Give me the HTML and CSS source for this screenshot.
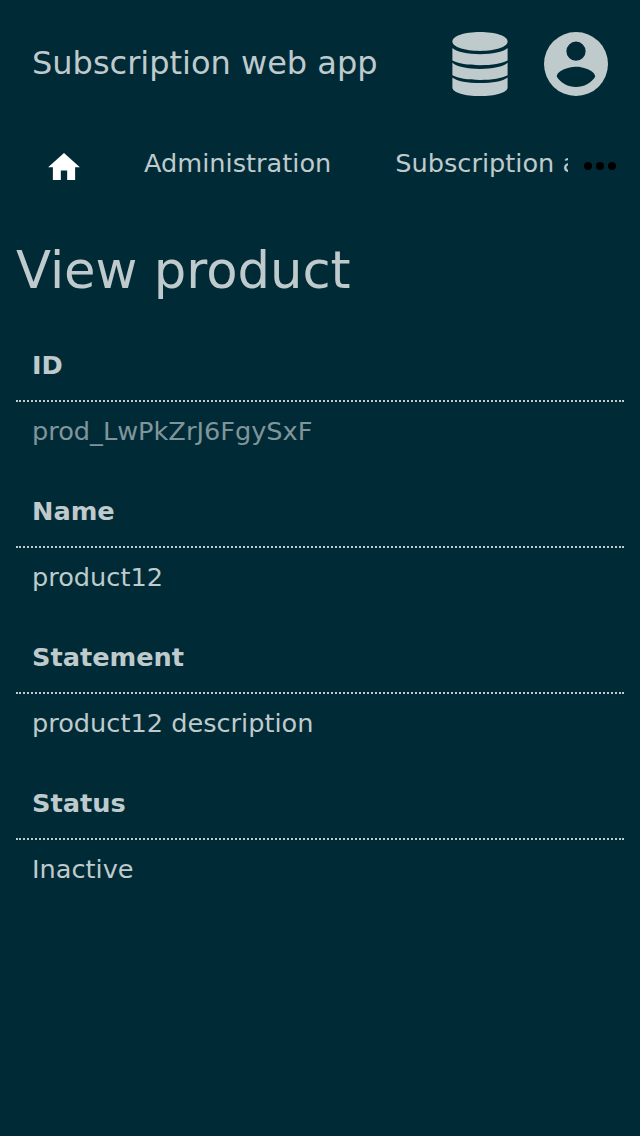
FILE: index.html
```html
<!DOCTYPE html>
<html lang="en">
<head>
<meta charset="utf-8">
<title>View product</title>
<link rel="stylesheet" href="styles.css">
</head>
<body>
<header class="header">
  <a class="brand">Subscription web app</a>
  <div class="actions">
    <svg class="icon-db" viewBox="0 0 56 64"><path d="M.4 9.500C.4 4 12.500 0 28 0s27.600 4 27.600 9.500S43.500 18.900 28 18.900.4 15 .4 9.500z"/><path d="M.4 16C5 20 15.500 22.200 28 22.200S51 20 55.600 16v12.500C50 31.500 40 33.200 28 33.200S6 31.500.4 28.500z"/><path d="M.4 30.700C5 34.700 15.500 36.900 28 36.900s23-2.200 27.600-6.200v12.500C50 46.200 40 47.900 28 47.900S6 46.200.4 43.200z"/><path d="M.4 45.400C5 49.200 15.500 51 28 51s23-1.800 27.600-5.600v10C55.600 60.500 43 64 28 64S.4 60.500.4 55.400z"/></svg>
    <svg class="icon-user" viewBox="0 0 64 64"><path fill-rule="evenodd" d="M32 0a32 32 0 1 0 0 64 32 32 0 0 0 0-64zm0 9.600a9.600 9.600 0 1 1 0 19.200 9.600 9.600 0 0 1 0-19.200zm0 45.400c-8 0-15.100-4.100-19.200-10.300C12.900 38.300 25.600 34.800 32 34.800s19.100 3.500 19.200 9.900C47.100 50.900 40 55 32 55z"/></svg>
  </div>
</header>
<nav class="nav">
  <div class="tabs">
    <a class="tab home"><svg class="icon-home" viewBox="2 3 20 17"><path d="M10 20v-6h4v6h5v-8h3L12 3 2 12h3v8z"/></svg></a>
    <a class="tab">Administration</a>
    <a class="tab">Subscription administration</a>
  </div>
  <div class="more"><svg class="icon-more" viewBox="0 0 32 8"><circle cx="4" cy="4" r="4"/><circle cx="16" cy="4" r="4"/><circle cx="28" cy="4" r="4"/></svg></div>
</nav>
<main class="main">
  <h1 class="title">View product</h1>
  <dl class="details">
    <dt class="label">ID</dt><dd class="value muted">prod_LwPkZrJ6FgySxF</dd>
    <dt class="label">Name</dt><dd class="value">product12</dd>
    <dt class="label">Statement</dt><dd class="value">product12 description</dd>
    <dt class="label">Status</dt><dd class="value">Inactive</dd>
  </dl>
</main>
</body>
</html>
```
FILE: styles.css
```css
body {
  margin: 0;
  min-height: 1136px;
  background: #002b36;
  color: #bfcacd;
  font: 25.6px/34px "DejaVu Sans", sans-serif;
}
svg { display: block; fill: currentColor; }
.header {
  display: flex;
  justify-content: space-between;
  align-items: center;
  height: 128px;
  padding: 0 32px;
}
.brand { font-size: 32px; line-height: 40px; padding-bottom: 2px; }
.actions { display: flex; gap: 36px; }
.icon-db { width: 56px; height: 64px; }
.icon-user { width: 64px; height: 64px; }
.nav { display: flex; height: 72px; }
.tabs { display: flex; width: 568px; overflow: hidden; }
.tab { flex: none; padding: 18px 32px; white-space: nowrap; }
.home { padding: 25px 32px 0 48px; color: #fff; }
.icon-home { width: 32px; height: 27px; }
.more { padding: 34px 0 0 16px; color: #000; }
.icon-more { width: 32px; height: 8px; }
.main { padding: 40px 16px 0; }
.title { margin: 0 0 48px; font-size: 51.2px; line-height: 60px; font-weight: 400; }
.details { margin: 0; }
.label { padding: 0 16px 18px; font-weight: 700; border-bottom: 2px dotted #bfcacd; }
.value { margin: 0; padding: 12px 16px 46px; }
.muted { color: #80959b; }
```
